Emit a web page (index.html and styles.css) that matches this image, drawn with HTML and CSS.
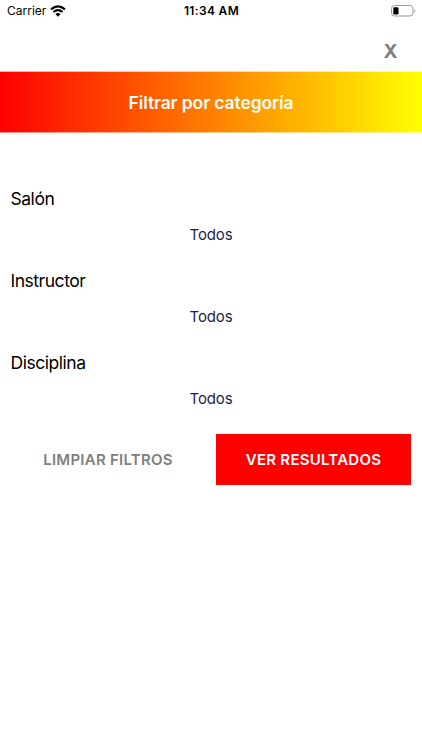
FILE: index.html
```html
<!DOCTYPE html>
<html lang="es">
<head>
<meta charset="utf-8">
<title>Filtrar por categoría</title>
<link rel="stylesheet" href="styles.css">
</head>
<body>
<div class="status">
  <div class="carrier"><span>Carrier</span>
    <svg class="wifi" viewBox="0 0 16 12" width="16" height="12"><path d="M1 4.3Q8-1.7 15 4.3M3.4 7Q8 3.1 12.6 7" fill="none" stroke="#000" stroke-width="2.2"/><path d="M5.4 9Q8 7 10.6 9L8 11.7Z"/></svg>
  </div>
  <time class="clock">11:34 AM</time>
  <svg class="battery" viewBox="0 0 26 12" width="26" height="12"><rect x="1.5" y=".5" width="21.5" height="10.5" rx="3" fill="none" stroke="#999"/><rect x="3.3" y="2.2" width="5.2" height="7.3" rx="1.2"/><path d="M24.3 4Q26.3 5.8 24.3 7.6Z" fill="#999"/></svg>
</div>
<div class="close-row"><button class="close">X</button></div>
<header class="title"><h1>Filtrar por categoría</h1></header>
<main class="filters">
  <section class="field"><h2>Salón</h2><p><span>Todos</span></p></section>
  <section class="field"><h2>Instructor</h2><p><span>Todos</span></p></section>
  <section class="field"><h2>Disciplina</h2><p><span>Todos</span></p></section>
  <div class="actions"><button class="clear"><span>LIMPIAR FILTROS</span></button><button class="results"><span>VER RESULTADOS</span></button></div>
</main>
</body>
</html>
```
FILE: styles.css
```css
* { box-sizing: border-box; }
body { margin: 0; background: #fff; color: #000; font-family: Inter, sans-serif; }
h1, h2, p { margin: 0; }
button { border: 0; padding: 0; background: none; font: inherit; }
.status { height: 22px; display: grid; grid-template-columns: 1fr auto 1fr; align-items: center; padding: 0 6px 0 7px; font-size: 12px; line-height: 22px; }
.carrier { display: flex; align-items: center; gap: 4px; }
.wifi { margin-top: -1px; }
.clock { font-weight: 600; font-size: 12px; letter-spacing: .35px; }
.battery { justify-self: end; margin-top: -1px; }
.close-row { height: 49px; display: flex; justify-content: flex-end; padding: 9px 24.5px 0 0; }
.close { height: 42px; color: #808080; font-weight: 700; font-size: 19px; line-height: 42px; }
.title { height: 62px; display: flex; align-items: center; justify-content: center; padding-top: 2px; background: linear-gradient(90deg, #f00, #ff0); border-top: 1px solid rgb(255 255 255 / 65%); border-bottom: 1px solid rgb(255 255 255 / 55%); background-origin: border-box; color: #fff; }
h1 { font-size: 17.5px; font-weight: 600; line-height: 22px; letter-spacing: -.1px; }
.filters { padding: 54px 11px 0; }
.field { height: 82px; }
.field:last-of-type { height: 83px; }
h2 { margin-left: -.5px; font-size: 17.5px; font-weight: 400; line-height: 24px; letter-spacing: -.47px; }
.field p { height: 48px; color: #1b1f4b; font-size: 15px; line-height: 48px; letter-spacing: -.15px; text-align: center; }
.actions { display: grid; grid-template-columns: 194px 195px; justify-content: space-between; height: 51px; }
.actions button { font-size: 15px; font-weight: 600; letter-spacing: .25px; }
.clear { color: #808080; }
.results { background: #f00; color: #fff; }
```
